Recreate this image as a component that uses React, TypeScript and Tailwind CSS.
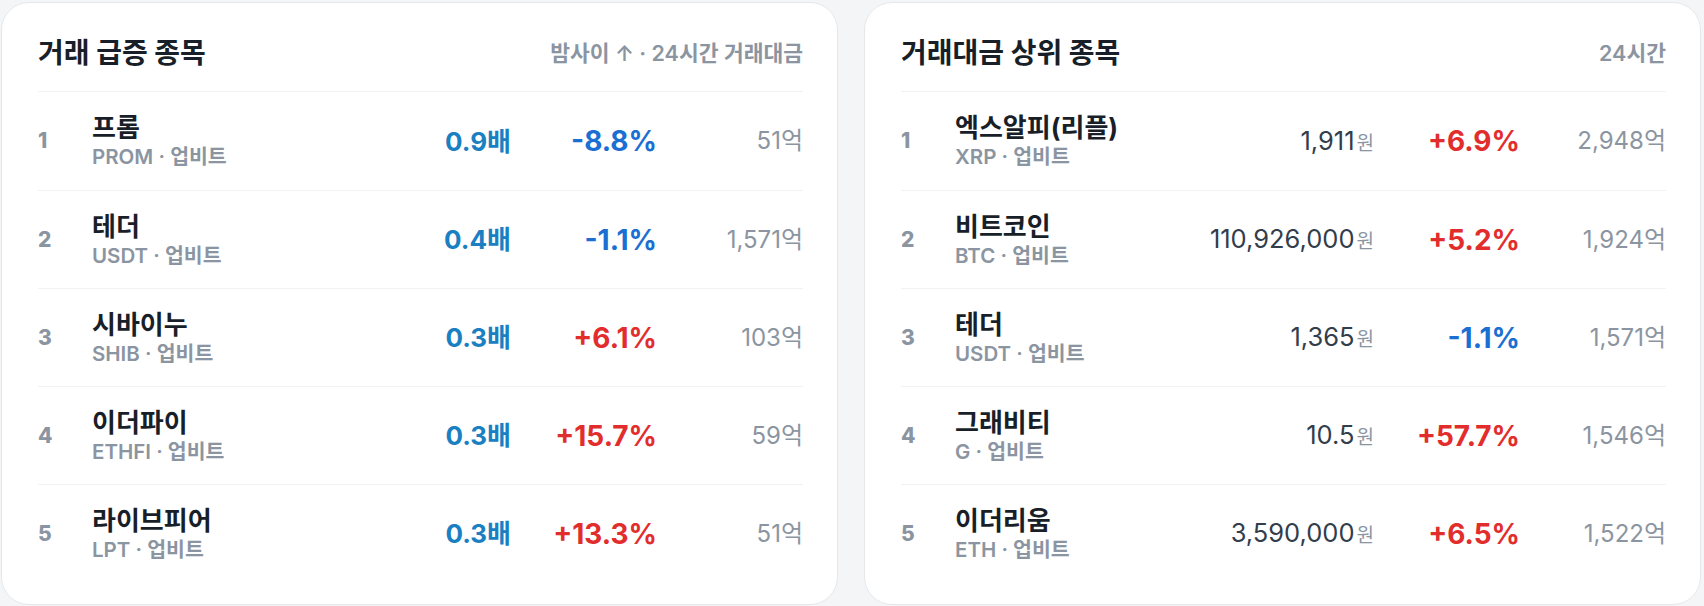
const FONT = "font-['Inter','Noto_Sans_CJK_KR',sans-serif]";

type SurgeRow = { name: string; symbol: string; ratio: string; change: string; volume: string };
type TopRow = { name: string; symbol: string; price: string; change: string; volume: string };

const surge: SurgeRow[] = [
  { name: "프롬", symbol: "PROM", ratio: "0.9배", change: "-8.8%", volume: "51억" },
  { name: "테더", symbol: "USDT", ratio: "0.4배", change: "-1.1%", volume: "1,571억" },
  { name: "시바이누", symbol: "SHIB", ratio: "0.3배", change: "+6.1%", volume: "103억" },
  { name: "이더파이", symbol: "ETHFI", ratio: "0.3배", change: "+15.7%", volume: "59억" },
  { name: "라이브피어", symbol: "LPT", ratio: "0.3배", change: "+13.3%", volume: "51억" },
];

const top: TopRow[] = [
  { name: "엑스알피(리플)", symbol: "XRP", price: "1,911", change: "+6.9%", volume: "2,948억" },
  { name: "비트코인", symbol: "BTC", price: "110,926,000", change: "+5.2%", volume: "1,924억" },
  { name: "테더", symbol: "USDT", price: "1,365", change: "-1.1%", volume: "1,571억" },
  { name: "그래비티", symbol: "G", price: "10.5", change: "+57.7%", volume: "1,546억" },
  { name: "이더리움", symbol: "ETH", price: "3,590,000", change: "+6.5%", volume: "1,522억" },
];

const changeColor = (c: string) => (c.startsWith("-") ? "text-[#1b6fd3]" : "text-[#e22d2d]");

const Card = ({ title, meta, children }: { title: string; meta: string; children: React.ReactNode }) => (
  <div className="bg-white rounded-[28px] border border-[#e5e8eb] pl-9 pr-[34px] pt-8 pb-[22px]">
    <div className="flex items-center justify-between h-9 pb-5 box-content border-b border-[#f0f2f4]">
      <h2 className="text-[28px] font-bold text-[#191f28]">{title}</h2>
      <span className="text-[21.5px] font-semibold text-[#8b95a1]">{meta}</span>
    </div>
    {children}
  </div>
);

const Row = ({
  rank, name, symbol, third, change, volume, first,
}: {
  rank: number; name: string; symbol: string; third: React.ReactNode; change: string; volume: string; first: boolean;
}) => (
  <div className={`flex items-center h-[98px] ${first ? "" : "border-t border-[#f0f2f4]"}`}>
    <div className="w-[54px] text-[21px] font-extrabold text-[#8b95a1]">{rank}</div>
    <div className="flex-1 flex flex-col">
      <span className="text-[26px] font-bold text-[#191f28] leading-[32px]">{name}</span>
      <span className="text-[20.5px] font-semibold text-[#8b95a1] leading-[26px]">{symbol} · 업비트</span>
    </div>
    <div className="text-right">{third}</div>
    <div className={`w-[146px] text-right text-[28px] font-bold ${changeColor(change)}`}>{change}</div>
    <div className="w-[146px] text-right text-[24px] text-[#8b95a1]">{volume}</div>
  </div>
);

export default function App() {
  return (
    <div className={`min-h-screen bg-[#f4f5f7] ${FONT}`}>
      <div className="grid grid-cols-2 gap-[26px] pl-px pr-[3px] pt-0.5">
        <Card title="거래 급증 종목" meta="밤사이 ↑ · 24시간 거래대금">
          {surge.map((r, i) => (
            <Row
              key={r.symbol}
              first={i === 0}
              rank={i + 1}
              name={r.name}
              symbol={r.symbol}
              change={r.change}
              volume={r.volume}
              third={<span className="text-[26px] font-bold text-[#1a80c2]">{r.ratio}</span>}
            />
          ))}
        </Card>
        <Card title="거래대금 상위 종목" meta="24시간">
          {top.map((r, i) => (
            <Row
              key={r.symbol}
              first={i === 0}
              rank={i + 1}
              name={r.name}
              symbol={r.symbol}
              change={r.change}
              volume={r.volume}
              third={
                <span>
                  <span className="text-[25.5px] text-[#333d4b]">{r.price}</span>
                  <span className="text-[19px] text-[#8b95a1] ml-0.5">원</span>
                </span>
              }
            />
          ))}
        </Card>
      </div>
    </div>
  );
}
